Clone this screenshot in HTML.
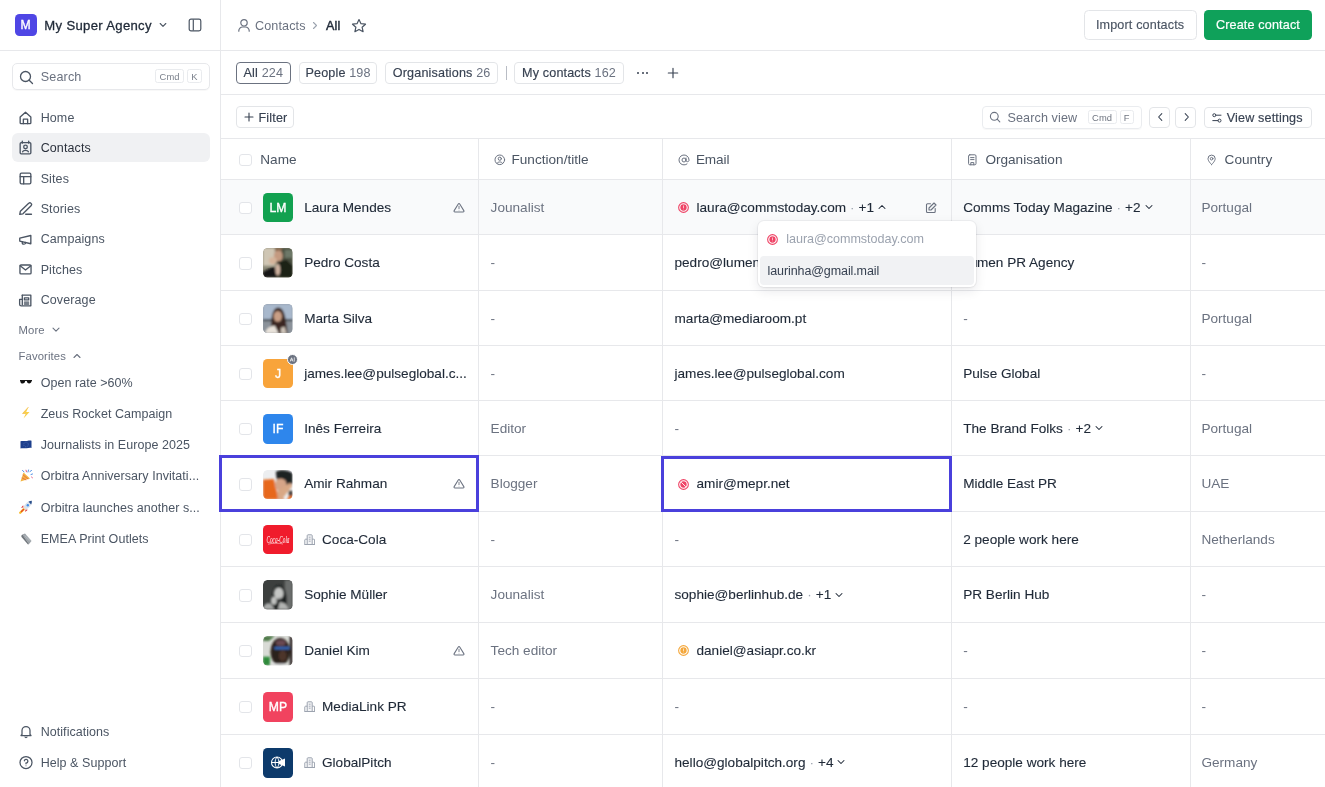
<!DOCTYPE html>
<html><head><meta charset="utf-8"><title>Contacts</title>
<style>
html,body{margin:0;padding:0;}
body{will-change:transform;width:1325px;height:787px;position:relative;overflow:hidden;background:#fff;font-family:"Liberation Sans", sans-serif;}
.t{position:absolute;line-height:20px;white-space:nowrap;}
svg{display:block}
</style></head><body>
<svg width="0" height="0" style="position:absolute"><defs><filter id="bl" x="-20%" y="-20%" width="140%" height="140%"><feGaussianBlur stdDeviation="0.9"/></filter></defs></svg>
<div style="position:absolute;left:0px;top:50px;width:1325px;height:1px;background:#e7e8eb"></div><div style="position:absolute;left:220px;top:0px;width:1px;height:787px;background:#e7e8eb"></div><div style="position:absolute;left:221px;top:94px;width:1104px;height:1px;background:#e7e8eb"></div><div style="position:absolute;left:221px;top:138px;width:1104px;height:1px;background:#e7e8eb"></div><div style="position:absolute;left:14.5px;top:14px;width:22px;height:22px;background:#4f46e5;border-radius:4.5px"></div><div class="t" style="left:14.5px;top:15.20px;font-size:12.2px;color:#fff;font-weight:400;letter-spacing:0px;width:22px;text-align:center;-webkit-text-stroke:0.35px #fff">M</div><div class="t" style="left:44.3px;top:16.00px;font-size:13.1px;color:#1f2937;font-weight:400;letter-spacing:0.33px;-webkit-text-stroke:0.3px #1f2937">My Super Agency</div><svg style="position:absolute;left:159px;top:22px;" width="8" height="6" viewBox="0 0 8 6" fill="none"><path d="M1.2 1.5 L4 4.3 L6.8 1.5" stroke="#4b5563" stroke-width="1.1" stroke-linecap="round" stroke-linejoin="round"/></svg><svg style="position:absolute;left:187px;top:17px;" width="16" height="16" viewBox="0 0 16 16" fill="none"><rect x="2.2" y="2.2" width="11.6" height="11.6" rx="1.8" stroke="#4b5563" stroke-width="1.2"/><path d="M6.3 2.5 V13.5" stroke="#4b5563" stroke-width="1.2"/></svg><div style="position:absolute;left:11.5px;top:62.5px;width:198px;height:27.6px;border:1px solid #e7e8eb;border-radius:5px;box-sizing:border-box;background:#fff;box-shadow:0 1px 1px rgba(0,0,0,0.03)"></div><svg style="position:absolute;left:18.5px;top:70px;" width="15" height="15" viewBox="0 0 15 15" fill="none"><circle cx="6.5" cy="6.5" r="5" stroke="#4b5563" stroke-width="1.3"/><path d="M10.2 10.2 L13.5 13.5" stroke="#4b5563" stroke-width="1.3" stroke-linecap="round"/></svg><div class="t" style="left:40.7px;top:66.80px;font-size:12.6px;color:#6b7280;font-weight:400;letter-spacing:0.15px;">Search</div><div style="position:absolute;left:154.7px;top:69.3px;width:29.8px;height:14px;border:1px solid #e9ebee;border-radius:2.5px;box-sizing:border-box"></div><div class="t" style="left:154.7px;top:66.60px;font-size:9.4px;color:#7b818c;font-weight:400;letter-spacing:0.1px;width:29.8px;text-align:center">Cmd</div><div style="position:absolute;left:187px;top:69.3px;width:14.8px;height:14px;border:1px solid #e9ebee;border-radius:2.5px;box-sizing:border-box"></div><div class="t" style="left:187px;top:66.60px;font-size:9.4px;color:#7b818c;font-weight:400;letter-spacing:0px;width:14.8px;text-align:center">K</div><div style="position:absolute;left:11.5px;top:133.3px;width:198px;height:29.2px;background:#f0f1f3;border-radius:6px"></div><svg style="position:absolute;left:18.2px;top:110.39999999999999px;" width="15" height="16" viewBox="0 0 14 15" fill="none"><path d="M2 6.5 L7 2 L12 6.5 V12 a0.8 0.8 0 0 1 -0.8 0.8 H2.8 A0.8 0.8 0 0 1 2 12 Z" stroke="#4b5563" stroke-width="1.25" stroke-linecap="round" stroke-linejoin="round"/><path d="M5 12.8 V8.6 H9 V12.8" stroke="#4b5563" stroke-width="1.25" stroke-linecap="round" stroke-linejoin="round"/></svg><div class="t" style="left:40.7px;top:108.10px;font-size:12.5px;color:#4b5563;font-weight:400;letter-spacing:0.1px;">Home</div><svg style="position:absolute;left:18.2px;top:140.4px;" width="15" height="16" viewBox="0 0 14 15" fill="none"><rect x="2" y="2.5" width="10" height="10.5" rx="1" stroke="#4b5563" stroke-width="1.25" stroke-linecap="round" stroke-linejoin="round"/><path d="M4 1 V3 M10 1 V3" stroke="#4b5563" stroke-width="1.25" stroke-linecap="round" stroke-linejoin="round"/><circle cx="7" cy="6.5" r="1.7" stroke="#4b5563" stroke-width="1.25" stroke-linecap="round" stroke-linejoin="round"/><path d="M4.3 11 C4.8 9.2 9.2 9.2 9.7 11" stroke="#4b5563" stroke-width="1.25" stroke-linecap="round" stroke-linejoin="round"/></svg><div class="t" style="left:40.7px;top:138.10px;font-size:12.5px;color:#2b313c;font-weight:400;letter-spacing:0.1px;">Contacts</div><svg style="position:absolute;left:18.2px;top:170.9px;" width="15" height="16" viewBox="0 0 14 15" fill="none"><rect x="2" y="2" width="10" height="10" rx="1.2" stroke="#4b5563" stroke-width="1.25" stroke-linecap="round" stroke-linejoin="round"/><path d="M2 5.3 H12 M5.3 5.3 V12" stroke="#4b5563" stroke-width="1.25" stroke-linecap="round" stroke-linejoin="round"/></svg><div class="t" style="left:40.7px;top:168.60px;font-size:12.5px;color:#4b5563;font-weight:400;letter-spacing:0.1px;">Sites</div><svg style="position:absolute;left:18.2px;top:201.29999999999998px;" width="15" height="16" viewBox="0 0 14 15" fill="none"><path d="M10 2.2 A1.55 1.55 0 0 1 12.2 4.4 L4.6 12 L1.6 12.6 L2.2 9.6 Z" stroke="#4b5563" stroke-width="1.25" stroke-linecap="round" stroke-linejoin="round"/><path d="M7.2 12.4 H12.6" stroke="#4b5563" stroke-width="1.25" stroke-linecap="round" stroke-linejoin="round"/></svg><div class="t" style="left:40.7px;top:199.00px;font-size:12.5px;color:#4b5563;font-weight:400;letter-spacing:0.1px;">Stories</div><svg style="position:absolute;left:18.2px;top:231.7px;" width="15" height="16" viewBox="0 0 14 15" fill="none"><path d="M1.6 5.8 L12 3.3 V11 L1.6 8.5 Z" stroke="#4b5563" stroke-width="1.25" stroke-linecap="round" stroke-linejoin="round"/><path d="M4 9 V10.4 A1 1 0 0 0 5.2 11.3 L6.4 11.1 A0.9 0.9 0 0 0 7.1 10.2 V9.8" stroke="#4b5563" stroke-width="1.25" stroke-linecap="round" stroke-linejoin="round"/></svg><div class="t" style="left:40.7px;top:229.40px;font-size:12.5px;color:#4b5563;font-weight:400;letter-spacing:0.1px;">Campaigns</div><svg style="position:absolute;left:18.2px;top:262.1px;" width="15" height="16" viewBox="0 0 14 15" fill="none"><rect x="1.8" y="2.8" width="10.4" height="8.4" rx="1" stroke="#4b5563" stroke-width="1.25" stroke-linecap="round" stroke-linejoin="round"/><path d="M2 3.5 L7 7.5 L12 3.5" stroke="#4b5563" stroke-width="1.25" stroke-linecap="round" stroke-linejoin="round"/></svg><div class="t" style="left:40.7px;top:259.80px;font-size:12.5px;color:#4b5563;font-weight:400;letter-spacing:0.1px;">Pitches</div><svg style="position:absolute;left:18.2px;top:292.5px;" width="15" height="16" viewBox="0 0 14 15" fill="none"><path d="M4 2 H12 V12 H3 A1.5 1.5 0 0 1 1.5 10.5 V6 H4" stroke="#4b5563" stroke-width="1.25" stroke-linecap="round" stroke-linejoin="round"/><path d="M4 2 V11" stroke="#4b5563" stroke-width="1.25" stroke-linecap="round" stroke-linejoin="round"/><path d="M6 4.5 H10 V6.5 H6 Z M6 8.5 H10 M6 10.3 H10" stroke="#4b5563" stroke-width="1.25" stroke-linecap="round" stroke-linejoin="round"/></svg><div class="t" style="left:40.7px;top:290.20px;font-size:12.5px;color:#4b5563;font-weight:400;letter-spacing:0.1px;">Coverage</div><div class="t" style="left:18.6px;top:319.90px;font-size:11.3px;color:#6b7280;font-weight:400;letter-spacing:0.1px;">More</div><svg style="position:absolute;left:51.5px;top:327px;" width="8" height="6" viewBox="0 0 8 6" fill="none"><path d="M1 1.2 L4 4.2 L7 1.2" stroke="#6b7280" stroke-width="1.1" stroke-linecap="round" stroke-linejoin="round"/></svg><div class="t" style="left:18.6px;top:345.90px;font-size:11.3px;color:#6b7280;font-weight:400;letter-spacing:0.1px;">Favorites</div><svg style="position:absolute;left:72.5px;top:352.5px;" width="8" height="6" viewBox="0 0 8 6" fill="none"><path d="M1 4.5 L4 1.5 L7 4.5" stroke="#6b7280" stroke-width="1.1" stroke-linecap="round" stroke-linejoin="round"/></svg><svg style="position:absolute;left:18.8px;top:375.2px;" width="14" height="14" viewBox="0 0 14 14" fill="none"><g transform="translate(0,2.8)"><path d="M1 2.2 H13 V3.2 H1 Z" fill="#1a1a1a"/><path d="M1.3 3 H6.2 C6.2 6.4 1.8 6.8 1.3 3.6 Z" fill="#111"/><path d="M7.8 3 H12.7 C12.2 6.8 7.8 6.4 7.8 3 Z" fill="#111"/></g></svg><div class="t" style="left:40.7px;top:372.80px;font-size:12.5px;color:#4b5563;font-weight:400;letter-spacing:0.05px;">Open rate &gt;60%</div><svg style="position:absolute;left:18.8px;top:406.3px;" width="14" height="14" viewBox="0 0 14 14" fill="none"><path d="M9.5 1 L3.5 7.5 H6.8 L4.5 12.5 L10.5 6 H7.2 Z" fill="#f9cf4a"/><path d="M9.5 1 L3.5 7.5 H6.8" stroke="#f3b53a" stroke-width="0.6" fill="none"/></svg><div class="t" style="left:40.7px;top:403.90px;font-size:12.5px;color:#4b5563;font-weight:400;letter-spacing:0.05px;">Zeus Rocket Campaign</div><svg style="position:absolute;left:18.8px;top:437.5px;" width="14" height="14" viewBox="0 0 14 14" fill="none"><path d="M1.5 3.2 C4 2.4 6 3.4 8 3 C10 2.6 11.5 2.4 12.5 2.8 V10 C11 9.6 9.5 10 7.5 10.3 C5.5 10.6 3.5 9.8 1.5 10.5 Z" fill="#1d3f8c"/><circle cx="7" cy="6.5" r="2.3" stroke="#5a78c0" stroke-width="0.7" stroke-dasharray="0.8 0.9" fill="none"/></svg><div class="t" style="left:40.7px;top:435.10px;font-size:12.5px;color:#4b5563;font-weight:400;letter-spacing:0.05px;">Journalists in Europe 2025</div><svg style="position:absolute;left:18.8px;top:468.8px;" width="14" height="14" viewBox="0 0 14 14" fill="none"><path d="M1.5 12.5 L4.5 3.5 L11 9.5 Z" fill="#f2b441"/><path d="M2.8 8.8 L7.2 11 M3.8 5.8 L9.2 10" stroke="#e8684a" stroke-width="0.9"/><path d="M3.5 1.5 L5 2.8 M9.5 1 L9 3 M12 5.5 L13.5 5 M11 2.5 L12.5 1.5" stroke="#3b82e0" stroke-width="0.9" stroke-linecap="round"/><path d="M7 1.2 L7.5 2.8 M12.5 8 L13.5 8.8" stroke="#e0507a" stroke-width="0.9" stroke-linecap="round"/></svg><div class="t" style="left:40.7px;top:466.40px;font-size:12.5px;color:#4b5563;font-weight:400;letter-spacing:0.05px;">Orbitra Anniversary Invitati...</div><svg style="position:absolute;left:18.8px;top:500.0px;" width="14" height="14" viewBox="0 0 14 14" fill="none"><path d="M12.8 0.8 C9 1 5.8 3.8 4.5 7.5 L6.5 9.5 C10.2 8.2 13 5 12.8 0.8 Z" fill="#d9e2ec"/><path d="M12.8 0.8 C11.5 0.9 10.5 1.2 9.5 1.8 L12.2 4.5 C12.7 3.4 12.9 2.2 12.8 0.8 Z" fill="#2a4e8a"/><circle cx="8.8" cy="5.2" r="1.2" fill="#3f8ee8"/><path d="M4.5 7.5 L2 7.8 L4.2 5.2 Z M6.5 9.5 L6.2 12 L8.8 9.8 Z" fill="#d83a3a"/><path d="M4.6 9.4 L1.2 12.8" stroke="#f7b928" stroke-width="2.2" stroke-linecap="round"/><path d="M4.6 9.4 L2.5 11.5" stroke="#e8452a" stroke-width="1.2" stroke-linecap="round"/></svg><div class="t" style="left:40.7px;top:497.60px;font-size:12.5px;color:#4b5563;font-weight:400;letter-spacing:0.05px;">Orbitra launches another s...</div><svg style="position:absolute;left:18.8px;top:531.2px;" width="14" height="14" viewBox="0 0 14 14" fill="none"><g transform="translate(0,1.5)"><path d="M3.5 2 L6 1 L12.5 8.5 L10 11.5 Z" fill="#9aa0a6"/><path d="M3.5 2 C2.5 2.5 2 3.5 2.5 4.5 L9 12 L10 11.5 Z" fill="#6f757b"/><path d="M5.5 3 L11 9 M6.8 2.5 L11.8 8" stroke="#c8ccd0" stroke-width="0.6"/></g></svg><div class="t" style="left:40.7px;top:528.80px;font-size:12.5px;color:#4b5563;font-weight:400;letter-spacing:0.05px;">EMEA Print Outlets</div><svg style="position:absolute;left:18.5px;top:723.5px;" width="14" height="15" viewBox="0 0 14 15" fill="none"><path d="M3 10.5 V6.5 A4 4 0 0 1 11 6.5 V10.5 L12 11.5 H2 Z" stroke="#4b5563" stroke-width="1.25" stroke-linecap="round" stroke-linejoin="round"/><path d="M6 13 A1.2 1.2 0 0 0 8 13" stroke="#4b5563" stroke-width="1.25" stroke-linecap="round" stroke-linejoin="round"/></svg><div class="t" style="left:40.7px;top:721.60px;font-size:12.5px;color:#4b5563;font-weight:400;letter-spacing:0.05px;">Notifications</div><svg style="position:absolute;left:18.5px;top:754.5px;" width="14" height="15" viewBox="0 0 14 15" fill="none"><circle cx="7" cy="7.5" r="6" stroke="#4b5563" stroke-width="1.25" stroke-linecap="round" stroke-linejoin="round"/><path d="M5.3 5.8 A1.8 1.8 0 1 1 7 8 V8.8" stroke="#4b5563" stroke-width="1.25" stroke-linecap="round" stroke-linejoin="round"/><circle cx="7" cy="10.8" r="0.5" fill="#4b5563"/></svg><div class="t" style="left:40.7px;top:752.60px;font-size:12.5px;color:#4b5563;font-weight:400;letter-spacing:0.05px;">Help &amp; Support</div><svg style="position:absolute;left:236.5px;top:17.5px;" width="14" height="15" viewBox="0 0 14 15" fill="none"><circle cx="7" cy="4.8" r="3.2" stroke="#6b7280" stroke-width="1.2" stroke-linecap="round" stroke-linejoin="round"/><path d="M1.8 13.2 V12.8 A3.8 3.8 0 0 1 5.6 9 H8.4 A3.8 3.8 0 0 1 12.2 12.8 V13.2" stroke="#6b7280" stroke-width="1.2" stroke-linecap="round" stroke-linejoin="round"/></svg><div class="t" style="left:255px;top:15.60px;font-size:12.6px;color:#6b7280;font-weight:400;letter-spacing:0.12px;">Contacts</div><svg style="position:absolute;left:312px;top:20.5px;" width="6" height="9" viewBox="0 0 6 9" fill="none"><path d="M1.5 1.5 L4.5 4.5 L1.5 7.5" stroke="#9ca3af" stroke-width="1.1" stroke-linecap="round" stroke-linejoin="round"/></svg><div class="t" style="left:326px;top:15.60px;font-size:12.6px;color:#1f2937;font-weight:400;letter-spacing:0.1px;-webkit-text-stroke:0.45px #1f2937">All</div><svg style="position:absolute;left:350.5px;top:17.5px;" width="16" height="15" viewBox="0 0 16 15" fill="none"><path d="M8 1.5 L10 5.7 L14.5 6.2 L11.1 9.2 L12.1 13.7 L8 11.4 L3.9 13.7 L4.9 9.2 L1.5 6.2 L6 5.7 Z" stroke="#4b5563" stroke-width="1.2" stroke-linejoin="round"/></svg><div style="position:absolute;left:1083.5px;top:10.4px;width:113.2px;height:29.2px;border:1px solid #e3e5e8;border-radius:4.5px;box-sizing:border-box;background:#fff"></div><div class="t" style="left:1083.5px;top:15.40px;font-size:12.6px;color:#4b5563;font-weight:400;letter-spacing:0.15px;width:113.2px;text-align:center;-webkit-text-stroke:0.15px #4b5563">Import contacts</div><div style="position:absolute;left:1204.2px;top:10.4px;width:107.6px;height:29.2px;background:#0fa15a;border-radius:4.5px"></div><div class="t" style="left:1204.2px;top:15.40px;font-size:12.6px;color:#fff;font-weight:400;letter-spacing:0.15px;width:107.6px;text-align:center;-webkit-text-stroke:0.2px #fff">Create contact</div><div style="position:absolute;left:236px;top:62.2px;width:54.69999999999999px;height:21.5px;border:1px solid #6b7280;border-radius:4px;box-sizing:border-box"></div><div class="t" style="left:236px;top:63.2px;width:54.69999999999999px;text-align:center;font-size:12.6px;letter-spacing:0.15px;color:#374151;line-height:20px;-webkit-text-stroke:0.15px #374151">All <span style="color:#6b7280;-webkit-text-stroke:0">224</span></div><div style="position:absolute;left:298.6px;top:62.2px;width:78.89999999999998px;height:21.5px;border:1px solid #e3e5e8;border-radius:4px;box-sizing:border-box"></div><div class="t" style="left:298.6px;top:63.2px;width:78.89999999999998px;text-align:center;font-size:12.6px;letter-spacing:0.15px;color:#374151;line-height:20px;-webkit-text-stroke:0.15px #374151">People <span style="color:#6b7280;-webkit-text-stroke:0">198</span></div><div style="position:absolute;left:385.4px;top:62.2px;width:112.5px;height:21.5px;border:1px solid #e3e5e8;border-radius:4px;box-sizing:border-box"></div><div class="t" style="left:385.4px;top:63.2px;width:112.5px;text-align:center;font-size:12.6px;letter-spacing:0.15px;color:#374151;line-height:20px;-webkit-text-stroke:0.15px #374151">Organisations <span style="color:#6b7280;-webkit-text-stroke:0">26</span></div><div style="position:absolute;left:505.8px;top:66px;width:1px;height:13.5px;background:#b9bdc5"></div><div style="position:absolute;left:514.3px;top:62.2px;width:109.5px;height:21.5px;border:1px solid #e3e5e8;border-radius:4px;box-sizing:border-box"></div><div class="t" style="left:514.3px;top:63.2px;width:109.5px;text-align:center;font-size:12.6px;letter-spacing:0.15px;color:#374151;line-height:20px;-webkit-text-stroke:0.15px #374151">My contacts <span style="color:#6b7280;-webkit-text-stroke:0">162</span></div><div style="position:absolute;left:637.2px;top:72px;width:2.1px;height:2.1px;background:#374151;border-radius:50%"></div><div style="position:absolute;left:641.6px;top:72px;width:2.1px;height:2.1px;background:#374151;border-radius:50%"></div><div style="position:absolute;left:646px;top:72px;width:2.1px;height:2.1px;background:#374151;border-radius:50%"></div><svg style="position:absolute;left:666.5px;top:67.3px;" width="12" height="12" viewBox="0 0 12 12" fill="none"><path d="M6 1.3 V10.7 M1.3 6 H10.7" stroke="#374151" stroke-width="1.15" stroke-linecap="round"/></svg><div style="position:absolute;left:236px;top:106.3px;width:58.4px;height:21.3px;border:1px solid #e3e5e8;border-radius:4px;box-sizing:border-box"></div><svg style="position:absolute;left:243.5px;top:112px;" width="10" height="10" viewBox="0 0 10 10" fill="none"><path d="M5 1 V9 M1 5 H9" stroke="#374151" stroke-width="1.1" stroke-linecap="round"/></svg><div class="t" style="left:258.5px;top:107.60px;font-size:12.6px;color:#374151;font-weight:400;letter-spacing:0.15px;-webkit-text-stroke:0.15px #374151">Filter</div><div style="position:absolute;left:981.6px;top:105.6px;width:160.3px;height:23.2px;border:1px solid #eaecef;border-radius:4px;box-sizing:border-box;box-shadow:0 1px 1px rgba(0,0,0,0.03)"></div><svg style="position:absolute;left:988.5px;top:111px;" width="12" height="12" viewBox="0 0 12 12" fill="none"><circle cx="5.3" cy="5.3" r="3.9" stroke="#6b7280" stroke-width="1.1"/><path d="M8.2 8.2 L10.8 10.8" stroke="#6b7280" stroke-width="1.1" stroke-linecap="round"/></svg><div class="t" style="left:1007.5px;top:107.60px;font-size:12.6px;color:#6b7280;font-weight:400;letter-spacing:0.1px;">Search view</div><div style="position:absolute;left:1087.6px;top:110.2px;width:29px;height:14.2px;border:1px solid #e9ebee;border-radius:2.5px;box-sizing:border-box"></div><div class="t" style="left:1087.6px;top:107.60px;font-size:9.4px;color:#6f7580;font-weight:400;letter-spacing:0.1px;width:29px;text-align:center">Cmd</div><div style="position:absolute;left:1119.5px;top:110.2px;width:14px;height:14.2px;border:1px solid #e9ebee;border-radius:2.5px;box-sizing:border-box"></div><div class="t" style="left:1119.5px;top:107.60px;font-size:9.4px;color:#6f7580;font-weight:400;letter-spacing:0px;width:14px;text-align:center">F</div><div style="position:absolute;left:1149.3px;top:106.9px;width:21.2px;height:21.1px;border:1px solid #e3e5e8;border-radius:4px;box-sizing:border-box"></div><svg style="position:absolute;left:1155.5px;top:112.3px;" width="9" height="10" viewBox="0 0 9 10" fill="none"><path d="M5.8 1.6 L2.6 5 L5.8 8.4" stroke="#374151" stroke-width="1.05" stroke-linecap="round" stroke-linejoin="round"/></svg><div style="position:absolute;left:1175.2px;top:106.9px;width:21.1px;height:21.1px;border:1px solid #e3e5e8;border-radius:4px;box-sizing:border-box"></div><svg style="position:absolute;left:1181.5px;top:112.3px;" width="9" height="10" viewBox="0 0 9 10" fill="none"><path d="M3.2 1.6 L6.4 5 L3.2 8.4" stroke="#374151" stroke-width="1.05" stroke-linecap="round" stroke-linejoin="round"/></svg><div style="position:absolute;left:1204.3px;top:106.9px;width:107.5px;height:21.1px;border:1px solid #e3e5e8;border-radius:4px;box-sizing:border-box"></div><svg style="position:absolute;left:1212.3px;top:112.6px;" width="10" height="10" viewBox="0 0 10 10" fill="none"><circle cx="2.3" cy="2.2" r="1.5" stroke="#374151" stroke-width="1"/><path d="M3.8 2.2 H9" stroke="#374151" stroke-width="1" stroke-linecap="round"/><path d="M0.8 7.6 H6" stroke="#374151" stroke-width="1" stroke-linecap="round"/><circle cx="7.5" cy="7.6" r="1.5" stroke="#374151" stroke-width="1"/></svg><div class="t" style="left:1226.8px;top:107.80px;font-size:12.6px;color:#374151;font-weight:400;letter-spacing:0.15px;-webkit-text-stroke:0.15px #374151">View settings</div><div style="position:absolute;left:221px;top:179px;width:1104px;height:55px;background:#f9fafb"></div><div style="position:absolute;left:221px;top:179px;width:1104px;height:1px;background:#e7e8eb"></div><div style="position:absolute;left:221px;top:234px;width:1104px;height:1px;background:#e7e8eb"></div><div style="position:absolute;left:221px;top:290px;width:1104px;height:1px;background:#e7e8eb"></div><div style="position:absolute;left:221px;top:345px;width:1104px;height:1px;background:#e7e8eb"></div><div style="position:absolute;left:221px;top:400px;width:1104px;height:1px;background:#e7e8eb"></div><div style="position:absolute;left:221px;top:455.3px;width:1104px;height:1px;background:#e7e8eb"></div><div style="position:absolute;left:221px;top:511px;width:1104px;height:1px;background:#e7e8eb"></div><div style="position:absolute;left:221px;top:566px;width:1104px;height:1px;background:#e7e8eb"></div><div style="position:absolute;left:221px;top:622px;width:1104px;height:1px;background:#e7e8eb"></div><div style="position:absolute;left:221px;top:677.5px;width:1104px;height:1px;background:#e7e8eb"></div><div style="position:absolute;left:221px;top:734px;width:1104px;height:1px;background:#e7e8eb"></div><div style="position:absolute;left:478px;top:138.5px;width:1px;height:648.5px;background:#e7e8eb"></div><div style="position:absolute;left:662px;top:138.5px;width:1px;height:648.5px;background:#e7e8eb"></div><div style="position:absolute;left:951px;top:138.5px;width:1px;height:648.5px;background:#e7e8eb"></div><div style="position:absolute;left:1190px;top:138.5px;width:1px;height:648.5px;background:#e7e8eb"></div><div style="position:absolute;left:239.2px;top:153.5px;width:12.5px;height:12.5px;border:1px solid #e3e5e9;border-radius:3px;box-sizing:border-box;background:#fff"></div><div class="t" style="left:260.3px;top:149.50px;font-size:13.6px;color:#4b5563;font-weight:400;letter-spacing:0px;">Name</div><svg style="position:absolute;left:493.5px;top:153.5px;" width="12" height="12" viewBox="0 0 12 12" fill="none"><circle cx="5.8" cy="5.8" r="4.8" stroke="#6b7280" stroke-width="1.0" stroke-linecap="round" stroke-linejoin="round"/><circle cx="5.8" cy="4.7" r="1.6" stroke="#6b7280" stroke-width="1.0" stroke-linecap="round" stroke-linejoin="round"/><path d="M3 9.3 C3.8 7.4 7.8 7.4 8.6 9.3" stroke="#6b7280" stroke-width="1.0" stroke-linecap="round" stroke-linejoin="round"/></svg><div class="t" style="left:511.5px;top:149.50px;font-size:13.6px;color:#4b5563;font-weight:400;letter-spacing:0px;">Function/title</div><svg style="position:absolute;left:677.5px;top:153.5px;" width="12" height="12" viewBox="0 0 12 12" fill="none"><circle cx="6" cy="6" r="2" stroke="#6b7280" stroke-width="1.0" stroke-linecap="round" stroke-linejoin="round"/><path d="M8 4 V6.8 A1.6 1.6 0 0 0 11 6.5 V6 A5 5 0 1 0 9 10" stroke="#6b7280" stroke-width="1.0" stroke-linecap="round" stroke-linejoin="round"/></svg><div class="t" style="left:695.9px;top:149.50px;font-size:13.6px;color:#4b5563;font-weight:400;letter-spacing:-0.1px;">Email</div><svg style="position:absolute;left:967px;top:154.0px;" width="10" height="12" viewBox="0 0 10 12" fill="none"><rect x="1.6" y="0.8" width="7.4" height="10" rx="1.2" stroke="#6b7280" stroke-width="1.0" stroke-linecap="round" stroke-linejoin="round"/><path d="M3.6 3.6 H7 M3.6 5.6 H7 M3.8 10.8 V8.6 H6.8 V10.8" stroke="#6b7280" stroke-width="1.0" stroke-linecap="round" stroke-linejoin="round"/></svg><div class="t" style="left:985.4px;top:149.50px;font-size:13.6px;color:#4b5563;font-weight:400;letter-spacing:0px;">Organisation</div><svg style="position:absolute;left:1206.8px;top:154.2px;" width="10" height="12" viewBox="0 0 10 12" fill="none"><path d="M4.6 10.6 C4.6 10.6 1 7.2 1 4.7 A3.6 3.6 0 0 1 8.2 4.7 C8.2 7.2 4.6 10.6 4.6 10.6 Z" stroke="#6b7280" stroke-width="1.0" stroke-linecap="round" stroke-linejoin="round"/><circle cx="4.6" cy="4.7" r="1.3" stroke="#6b7280" stroke-width="1.0" stroke-linecap="round" stroke-linejoin="round"/></svg><div class="t" style="left:1224.6px;top:149.50px;font-size:13.6px;color:#4b5563;font-weight:400;letter-spacing:0px;">Country</div><div style="position:absolute;left:239.2px;top:201.5px;width:12.5px;height:12.5px;border:1px solid #e3e5e9;border-radius:3px;box-sizing:border-box;background:#fff"></div><div style="position:absolute;left:263.2px;top:192.89999999999998px;width:29.6px;height:29.6px;background:#12a150;border-radius:4.5px"></div><div class="t" style="left:263.2px;top:198.00px;font-size:12.2px;color:#fff;font-weight:400;letter-spacing:0.1px;width:29.6px;text-align:center;-webkit-text-stroke:0.35px #fff">LM</div><div class="t" style="left:304.2px;top:197.70px;font-size:13.6px;color:#1f2937;font-weight:400;letter-spacing:0px;-webkit-text-stroke:0.12px #1f2937;">Laura Mendes</div><svg style="position:absolute;left:452.5px;top:200.7px;" width="12" height="12" viewBox="0 0 12 12" fill="none"><path d="M5.1 3.3 Q6 1.8 6.9 3.3 L10.8 9.6 Q11.5 10.9 10 10.9 H2 Q0.5 10.9 1.2 9.6 Z" stroke="#6b7280" stroke-width="1.05" stroke-linejoin="round"/><path d="M6 5.2 V7.6" stroke="#6b7280" stroke-width="0.9" stroke-linecap="round"/><circle cx="6" cy="9.1" r="0.45" fill="#6b7280"/></svg><div class="t" style="left:490.6px;top:197.70px;font-size:13.6px;color:#6b7280;font-weight:400;letter-spacing:0px;">Jounalist</div><svg style="position:absolute;left:678.0px;top:202.2px;" width="11" height="11" viewBox="0 0 11 11" fill="none"><circle cx="5.5" cy="5.5" r="4.85" stroke="#ef4466" stroke-width="1.1"/><circle cx="5.5" cy="5.5" r="3.15" fill="#ef4466"/><path d="M5.5 3.9 V5.9" stroke="#fff" stroke-width="0.8" stroke-linecap="round" opacity="0.8"/><circle cx="5.5" cy="7.1" r="0.4" fill="#fff" opacity="0.8"/></svg><div class="t" style="left:696.5px;top:197.70px;font-size:13.6px;color:#1f2937;font-weight:400;letter-spacing:0px;-webkit-text-stroke:0.12px #1f2937;">laura@commstoday.com<span style="color:#9ca3af;-webkit-text-stroke:0;padding:0 4px 0 4px">·</span>+1<svg style="display:inline-block;vertical-align:middle;margin-left:4px;position:relative;top:-1px" width="8" height="6" viewBox="0 0 8 6" fill="none"><path d="M1 4.5 L4 1.5 L7 4.5" stroke="#1f2937" stroke-width="1.05" stroke-linecap="round" stroke-linejoin="round"/></svg></div><svg style="position:absolute;left:924.8px;top:201.5px;" width="12" height="12" viewBox="0 0 12 12" fill="none"><path d="M5.5 1.8 H2.5 A1 1 0 0 0 1.5 2.8 V9.5 A1 1 0 0 0 2.5 10.5 H9.2 A1 1 0 0 0 10.2 9.5 V6.5" stroke="#6b7280" stroke-width="1.1" stroke-linecap="round"/><path d="M9 1 L11 3 L6 8 H4 V6 Z" stroke="#6b7280" stroke-width="1.1" stroke-linejoin="round"/></svg><div class="t" style="left:963.2px;top:197.70px;font-size:13.6px;color:#1f2937;font-weight:400;letter-spacing:0px;-webkit-text-stroke:0.12px #1f2937;">Comms Today Magazine<span style="color:#9ca3af;-webkit-text-stroke:0;padding:0 4px 0 4px">·</span>+2<svg style="display:inline-block;vertical-align:middle;margin-left:4px;position:relative;top:-1px" width="8" height="6" viewBox="0 0 8 6" fill="none"><path d="M1 1.5 L4 4.5 L7 1.5" stroke="#1f2937" stroke-width="1.05" stroke-linecap="round" stroke-linejoin="round"/></svg></div><div class="t" style="left:1201.4px;top:197.70px;font-size:13.6px;color:#6b7280;font-weight:400;letter-spacing:0px;">Portugal</div><div style="position:absolute;left:239.2px;top:257.0px;width:12.5px;height:12.5px;border:1px solid #e3e5e9;border-radius:3px;box-sizing:border-box;background:#fff"></div><svg style="position:absolute;left:263.2px;top:248.40px;border-radius:4.5px" width="29.6" height="29.6" viewBox="0 0 30 30"><defs><clipPath id="cpedro"><rect width="30" height="30" rx="4.5"/></clipPath></defs><g clip-path="url(#cpedro)"><rect width="30" height="30" fill="#8c8a78"/>
<g filter="url(#bl)">
<rect x="0" y="0" width="12" height="18" fill="#cfc6b4"/>
<rect x="18" y="0" width="12" height="30" fill="#4a5040"/>
<rect x="22" y="2" width="8" height="8" fill="#6d7868"/>
<ellipse cx="15.5" cy="8" rx="4.5" ry="6" fill="#c49a80"/>
<rect x="12" y="0" width="7" height="3" fill="#8a6a50"/>
<ellipse cx="10" cy="13" rx="4" ry="3.5" fill="#d5b49a"/>
<path d="M0 24 L10 19 L16 22 L14 30 L0 30 Z" fill="#121212"/>
<path d="M14 14 L24 12 L30 18 V30 H14 Z" fill="#1e2219"/>
<ellipse cx="15" cy="22" rx="2.5" ry="6" fill="#cfb2a0"/>
</g></g></svg><div class="t" style="left:304.2px;top:253.20px;font-size:13.6px;color:#1f2937;font-weight:400;letter-spacing:0px;-webkit-text-stroke:0.12px #1f2937;">Pedro Costa</div><div class="t" style="left:490.6px;top:253.20px;font-size:13.6px;color:#6b7280;font-weight:400;letter-spacing:0px;">-</div><div class="t" style="left:674.5px;top:253.20px;font-size:13.6px;color:#1f2937;font-weight:400;letter-spacing:0px;-webkit-text-stroke:0.12px #1f2937;">pedro@lumenpr.com</div><div class="t" style="left:963.2px;top:253.20px;font-size:13.6px;color:#1f2937;font-weight:400;letter-spacing:0px;-webkit-text-stroke:0.12px #1f2937;"><span style="letter-spacing:-0.7px">Lu</span>men PR Agency</div><div class="t" style="left:1201.4px;top:253.20px;font-size:13.6px;color:#6b7280;font-weight:400;letter-spacing:0px;">-</div><div style="position:absolute;left:239.2px;top:312.5px;width:12.5px;height:12.5px;border:1px solid #e3e5e9;border-radius:3px;box-sizing:border-box;background:#fff"></div><svg style="position:absolute;left:263.2px;top:303.90px;border-radius:4.5px" width="29.6" height="29.6" viewBox="0 0 30 30"><defs><clipPath id="cmarta"><rect width="30" height="30" rx="4.5"/></clipPath></defs><g clip-path="url(#cmarta)"><rect width="30" height="30" fill="#8f98a3"/>
<g filter="url(#bl)">
<rect x="0" y="0" width="30" height="16" fill="#a8b8cc"/>
<rect x="0" y="15.5" width="30" height="2" fill="#2e3438"/>
<rect x="0" y="17.5" width="30" height="12.5" fill="#8b929a"/>
<path d="M8 30 C8 14 9 4 15.5 3.5 C22 4 23 14 25 30 Z" fill="#3a2820"/>
<ellipse cx="15" cy="12.5" rx="4.2" ry="5.5" fill="#c99f86"/>
<path d="M2 30 C3 24 8 22 12 22 L16 30 Z" fill="#e9e3db"/>
<path d="M18 24 L22 23 L24 30 H18 Z" fill="#cfc5ba"/>
</g></g></svg><div class="t" style="left:304.2px;top:308.70px;font-size:13.6px;color:#1f2937;font-weight:400;letter-spacing:0px;-webkit-text-stroke:0.12px #1f2937;">Marta Silva</div><div class="t" style="left:490.6px;top:308.70px;font-size:13.6px;color:#6b7280;font-weight:400;letter-spacing:0px;">-</div><div class="t" style="left:674.5px;top:308.70px;font-size:13.6px;color:#1f2937;font-weight:400;letter-spacing:0px;-webkit-text-stroke:0.12px #1f2937;">marta@mediaroom.pt</div><div class="t" style="left:963.2px;top:308.70px;font-size:13.6px;color:#6b7280;font-weight:400;letter-spacing:0px;">-</div><div class="t" style="left:1201.4px;top:308.70px;font-size:13.6px;color:#6b7280;font-weight:400;letter-spacing:0px;">Portugal</div><div style="position:absolute;left:239.2px;top:367.5px;width:12.5px;height:12.5px;border:1px solid #e3e5e9;border-radius:3px;box-sizing:border-box;background:#fff"></div><div style="position:absolute;left:263.2px;top:358.9px;width:29.6px;height:29.6px;background:#f8a43b;border-radius:4.5px"></div><div class="t" style="left:263.2px;top:364.00px;font-size:12.2px;color:#fff;font-weight:400;letter-spacing:0.1px;width:29.6px;text-align:center;-webkit-text-stroke:0.35px #fff">J</div><div style="position:absolute;left:287.3px;top:354.09999999999997px;width:11px;height:11px;background:#6b7280;border-radius:50%;border:1px solid #fff;box-sizing:border-box"></div><svg style="position:absolute;left:289.3px;top:356.09999999999997px;" width="7" height="7" viewBox="0 0 7 7" fill="none"><path d="M1.3 5.2 L2.6 1.8 L3.9 5.2 M1.8 4 H3.4 M5.3 1.8 V5.2" stroke="#fff" stroke-width="0.7" stroke-linecap="round" stroke-linejoin="round"/></svg><div class="t" style="left:304.2px;top:363.70px;font-size:13.6px;color:#1f2937;font-weight:400;letter-spacing:0px;-webkit-text-stroke:0.12px #1f2937;">james.lee@pulseglobal.c...</div><div class="t" style="left:490.6px;top:363.70px;font-size:13.6px;color:#6b7280;font-weight:400;letter-spacing:0px;">-</div><div class="t" style="left:674.5px;top:363.70px;font-size:13.6px;color:#1f2937;font-weight:400;letter-spacing:0px;-webkit-text-stroke:0.12px #1f2937;">james.lee@pulseglobal.com</div><div class="t" style="left:963.2px;top:363.70px;font-size:13.6px;color:#1f2937;font-weight:400;letter-spacing:0px;-webkit-text-stroke:0.12px #1f2937;">Pulse Global</div><div class="t" style="left:1201.4px;top:363.70px;font-size:13.6px;color:#6b7280;font-weight:400;letter-spacing:0px;">-</div><div style="position:absolute;left:239.2px;top:422.65px;width:12.5px;height:12.5px;border:1px solid #e3e5e9;border-radius:3px;box-sizing:border-box;background:#fff"></div><div style="position:absolute;left:263.2px;top:414.04999999999995px;width:29.6px;height:29.6px;background:#2e86ec;border-radius:4.5px"></div><div class="t" style="left:263.2px;top:419.15px;font-size:12.2px;color:#fff;font-weight:400;letter-spacing:0.1px;width:29.6px;text-align:center;-webkit-text-stroke:0.35px #fff">IF</div><div class="t" style="left:304.2px;top:418.85px;font-size:13.6px;color:#1f2937;font-weight:400;letter-spacing:0px;-webkit-text-stroke:0.12px #1f2937;">Inês Ferreira</div><div class="t" style="left:490.6px;top:418.85px;font-size:13.6px;color:#6b7280;font-weight:400;letter-spacing:0px;">Editor</div><div class="t" style="left:674.5px;top:418.85px;font-size:13.6px;color:#6b7280;font-weight:400;letter-spacing:0px;">-</div><div class="t" style="left:963.2px;top:418.85px;font-size:13.6px;color:#1f2937;font-weight:400;letter-spacing:0px;-webkit-text-stroke:0.12px #1f2937;">The Brand Folks<span style="color:#9ca3af;-webkit-text-stroke:0;padding:0 4px 0 4px">·</span>+2<svg style="display:inline-block;vertical-align:middle;margin-left:4px;position:relative;top:-1px" width="8" height="6" viewBox="0 0 8 6" fill="none"><path d="M1 1.5 L4 4.5 L7 1.5" stroke="#1f2937" stroke-width="1.05" stroke-linecap="round" stroke-linejoin="round"/></svg></div><div class="t" style="left:1201.4px;top:418.85px;font-size:13.6px;color:#6b7280;font-weight:400;letter-spacing:0px;">Portugal</div><div style="position:absolute;left:239.2px;top:478.15px;width:12.5px;height:12.5px;border:1px solid #e3e5e9;border-radius:3px;box-sizing:border-box;background:#fff"></div><svg style="position:absolute;left:263.2px;top:469.55px;border-radius:4.5px" width="29.6" height="29.6" viewBox="0 0 30 30"><defs><clipPath id="camir"><rect width="30" height="30" rx="4.5"/></clipPath></defs><g clip-path="url(#camir)"><rect width="30" height="30" fill="#eceef0"/>
<g filter="url(#bl)">
<path d="M13 2 C16 -1 28 0 30 4 V14 L24 16 C22 10 18 8 14 10 Z" fill="#1c2024"/>
<path d="M0 10 L11 9 L14 22 L22 30 H0 Z" fill="#e7681d"/>
<ellipse cx="18" cy="15" rx="6" ry="6.5" fill="#d6a588"/>
<path d="M14 22 L27 13 L30 16 L19 30 H15 Z" fill="#d9a885"/>
<path d="M24 30 L30 22 V30 Z" fill="#e7681d"/>
<rect x="26" y="21" width="4" height="5" fill="#40403e"/>
</g></g></svg><div class="t" style="left:304.2px;top:474.35px;font-size:13.6px;color:#1f2937;font-weight:400;letter-spacing:0px;-webkit-text-stroke:0.12px #1f2937;">Amir Rahman</div><svg style="position:absolute;left:452.5px;top:477.34999999999997px;" width="12" height="12" viewBox="0 0 12 12" fill="none"><path d="M5.1 3.3 Q6 1.8 6.9 3.3 L10.8 9.6 Q11.5 10.9 10 10.9 H2 Q0.5 10.9 1.2 9.6 Z" stroke="#6b7280" stroke-width="1.05" stroke-linejoin="round"/><path d="M6 5.2 V7.6" stroke="#6b7280" stroke-width="0.9" stroke-linecap="round"/><circle cx="6" cy="9.1" r="0.45" fill="#6b7280"/></svg><div class="t" style="left:490.6px;top:474.35px;font-size:13.6px;color:#6b7280;font-weight:400;letter-spacing:0px;">Blogger</div><svg style="position:absolute;left:678.0px;top:478.84999999999997px;" width="11" height="11" viewBox="0 0 11 11" fill="none"><circle cx="5.5" cy="5.5" r="4.85" stroke="#ef4466" stroke-width="1.1"/><circle cx="5.5" cy="5.5" r="3.15" fill="#ef4466"/><path d="M3.5 3.5 L7.5 7.5" stroke="#fff" stroke-width="0.9" stroke-linecap="round"/></svg><div class="t" style="left:696.5px;top:474.35px;font-size:13.6px;color:#1f2937;font-weight:400;letter-spacing:0px;-webkit-text-stroke:0.12px #1f2937;">amir@mepr.net</div><div class="t" style="left:963.2px;top:474.35px;font-size:13.6px;color:#1f2937;font-weight:400;letter-spacing:0px;-webkit-text-stroke:0.12px #1f2937;">Middle East PR</div><div class="t" style="left:1201.4px;top:474.35px;font-size:13.6px;color:#6b7280;font-weight:400;letter-spacing:0px;">UAE</div><div style="position:absolute;left:239.2px;top:533.5px;width:12.5px;height:12.5px;border:1px solid #e3e5e9;border-radius:3px;box-sizing:border-box;background:#fff"></div><div style="position:absolute;left:263.2px;top:524.9000000000001px;width:29.6px;height:29.6px;background:#f01c2c;border-radius:4.5px"></div><div class="t" style="left:263.2px;top:530.00px;font-size:12.2px;color:#fff;font-weight:400;letter-spacing:0.1px;width:29.6px;text-align:center;-webkit-text-stroke:0.35px #fff"></div><svg style="position:absolute;left:263.2px;top:524.9000000000001px;" width="30" height="30" viewBox="0 0 30 30" fill="none"><text x="15" y="18" text-anchor="middle" font-family="Liberation Serif" font-style="italic" font-size="9.5" fill="#fff" textLength="23" lengthAdjust="spacingAndGlyphs">Coca-Cola</text><path d="M5 19.2 C10 17.8 16 18 20 19" stroke="#fff" stroke-width="0.5" fill="none"/></svg><svg style="position:absolute;left:303.8px;top:533.5px;" width="11.5" height="11.5" viewBox="0 0 11.5 11.5" fill="none"><path d="M3.2 10.6 V1.6 A0.8 0.8 0 0 1 4 0.8 H7.4 A0.8 0.8 0 0 1 8.2 1.6 V10.6 Z" stroke="#9ca3af" stroke-width="1" fill="#f3f4f6"/><path d="M3.2 5.2 H1.6 A0.8 0.8 0 0 0 0.8 6 V10.6 H3.2 M8.2 5.2 H9.8 A0.8 0.8 0 0 1 10.6 6 V10.6 H8.2" stroke="#9ca3af" stroke-width="1" fill="none"/><path d="M4.8 3.2 H6.6 M4.8 5.2 H6.6 M4.8 7.2 H6.6" stroke="#9ca3af" stroke-width="0.9"/><path d="M0.5 10.6 H11" stroke="#9ca3af" stroke-width="1"/></svg><div class="t" style="left:322px;top:529.70px;font-size:13.6px;color:#1f2937;font-weight:400;letter-spacing:0px;-webkit-text-stroke:0.12px #1f2937;">Coca-Cola</div><div class="t" style="left:490.6px;top:529.70px;font-size:13.6px;color:#6b7280;font-weight:400;letter-spacing:0px;">-</div><div class="t" style="left:674.5px;top:529.70px;font-size:13.6px;color:#6b7280;font-weight:400;letter-spacing:0px;">-</div><div class="t" style="left:963.2px;top:529.70px;font-size:13.6px;color:#1f2937;font-weight:400;letter-spacing:0px;-webkit-text-stroke:0.12px #1f2937;">2 people work here</div><div class="t" style="left:1201.4px;top:529.70px;font-size:13.6px;color:#6b7280;font-weight:400;letter-spacing:0px;">Netherlands</div><div style="position:absolute;left:239.2px;top:589.0px;width:12.5px;height:12.5px;border:1px solid #e3e5e9;border-radius:3px;box-sizing:border-box;background:#fff"></div><svg style="position:absolute;left:263.2px;top:580.40px;border-radius:4.5px" width="29.6" height="29.6" viewBox="0 0 30 30"><defs><clipPath id="csophie"><rect width="30" height="30" rx="4.5"/></clipPath></defs><g clip-path="url(#csophie)"><rect width="30" height="30" fill="#3c3f3e"/>
<g filter="url(#bl)">
<rect x="22" y="0" width="8" height="30" fill="#6a6d6c"/>
<path d="M10 30 C9 16 10 5 16 5 C23 5 25 16 24 30 Z" fill="#1e2120"/>
<ellipse cx="16" cy="13.5" rx="4.8" ry="6" fill="#c4c6c4"/>
<path d="M16 17.5 L18 18 L16 19 Z" fill="#6a6a6a"/>
<ellipse cx="11" cy="21" rx="3" ry="4" fill="#bfc1bf"/>
<path d="M0 30 C1 24 4 23 8 24 L12 30 Z" fill="#a9abaa"/>
<path d="M15 30 L17 22 L23 24 L26 30 Z" fill="#b2b4b2"/>
</g></g></svg><div class="t" style="left:304.2px;top:585.20px;font-size:13.6px;color:#1f2937;font-weight:400;letter-spacing:0px;-webkit-text-stroke:0.12px #1f2937;">Sophie Müller</div><div class="t" style="left:490.6px;top:585.20px;font-size:13.6px;color:#6b7280;font-weight:400;letter-spacing:0px;">Jounalist</div><div class="t" style="left:674.5px;top:585.20px;font-size:13.6px;color:#1f2937;font-weight:400;letter-spacing:0px;-webkit-text-stroke:0.12px #1f2937;">sophie@berlinhub.de<span style="color:#9ca3af;-webkit-text-stroke:0;padding:0 4px 0 4px">·</span>+1<svg style="display:inline-block;vertical-align:middle;margin-left:4px;position:relative;top:-1px" width="8" height="6" viewBox="0 0 8 6" fill="none"><path d="M1 1.5 L4 4.5 L7 1.5" stroke="#1f2937" stroke-width="1.05" stroke-linecap="round" stroke-linejoin="round"/></svg></div><div class="t" style="left:963.2px;top:585.20px;font-size:13.6px;color:#1f2937;font-weight:400;letter-spacing:0px;-webkit-text-stroke:0.12px #1f2937;">PR Berlin Hub</div><div class="t" style="left:1201.4px;top:585.20px;font-size:13.6px;color:#6b7280;font-weight:400;letter-spacing:0px;">-</div><div style="position:absolute;left:239.2px;top:644.75px;width:12.5px;height:12.5px;border:1px solid #e3e5e9;border-radius:3px;box-sizing:border-box;background:#fff"></div><svg style="position:absolute;left:263.2px;top:636.15px;border-radius:4.5px" width="29.6" height="29.6" viewBox="0 0 30 30"><defs><clipPath id="cdaniel"><rect width="30" height="30" rx="4.5"/></clipPath></defs><g clip-path="url(#cdaniel)"><rect width="30" height="30" fill="#d9dbd6"/>
<g filter="url(#bl)">
<path d="M0 0 H12 L6 5 H0 Z" fill="#4f7a48"/>
<rect x="0" y="21" width="7" height="9" fill="#2f8a3a"/>
<ellipse cx="17.5" cy="16" rx="10" ry="14" fill="#2b201b"/>
<ellipse cx="18" cy="7" rx="5" ry="3" fill="#6a4a52"/>
<ellipse cx="20" cy="20" rx="4" ry="5.5" fill="#4e352b"/>
<rect x="11.5" y="11" width="16" height="2.8" rx="1.3" fill="#3468b8"/>
<rect x="27" y="0" width="3" height="30" fill="#2a2422"/>
<rect x="9" y="28" width="14" height="2" fill="#e6e8ea"/>
</g></g></svg><div class="t" style="left:304.2px;top:640.95px;font-size:13.6px;color:#1f2937;font-weight:400;letter-spacing:0px;-webkit-text-stroke:0.12px #1f2937;">Daniel Kim</div><svg style="position:absolute;left:452.5px;top:643.95px;" width="12" height="12" viewBox="0 0 12 12" fill="none"><path d="M5.1 3.3 Q6 1.8 6.9 3.3 L10.8 9.6 Q11.5 10.9 10 10.9 H2 Q0.5 10.9 1.2 9.6 Z" stroke="#6b7280" stroke-width="1.05" stroke-linejoin="round"/><path d="M6 5.2 V7.6" stroke="#6b7280" stroke-width="0.9" stroke-linecap="round"/><circle cx="6" cy="9.1" r="0.45" fill="#6b7280"/></svg><div class="t" style="left:490.6px;top:640.95px;font-size:13.6px;color:#6b7280;font-weight:400;letter-spacing:0px;">Tech editor</div><svg style="position:absolute;left:678.0px;top:645.45px;" width="11" height="11" viewBox="0 0 11 11" fill="none"><circle cx="5.5" cy="5.5" r="4.85" stroke="#f4a73b" stroke-width="1.1"/><circle cx="5.5" cy="5.5" r="3.15" fill="#f4a73b"/><path d="M5.5 3.9 V5.9" stroke="#fff" stroke-width="0.8" stroke-linecap="round" opacity="0.8"/><circle cx="5.5" cy="7.1" r="0.4" fill="#fff" opacity="0.8"/></svg><div class="t" style="left:696.5px;top:640.95px;font-size:13.6px;color:#1f2937;font-weight:400;letter-spacing:0px;-webkit-text-stroke:0.12px #1f2937;">daniel@asiapr.co.kr</div><div class="t" style="left:963.2px;top:640.95px;font-size:13.6px;color:#6b7280;font-weight:400;letter-spacing:0px;">-</div><div class="t" style="left:1201.4px;top:640.95px;font-size:13.6px;color:#6b7280;font-weight:400;letter-spacing:0px;">-</div><div style="position:absolute;left:239.2px;top:700.75px;width:12.5px;height:12.5px;border:1px solid #e3e5e9;border-radius:3px;box-sizing:border-box;background:#fff"></div><div style="position:absolute;left:263.2px;top:692.1500000000001px;width:29.6px;height:29.6px;background:#f1435f;border-radius:4.5px"></div><div class="t" style="left:263.2px;top:697.25px;font-size:12.2px;color:#fff;font-weight:400;letter-spacing:0.1px;width:29.6px;text-align:center;-webkit-text-stroke:0.35px #fff">MP</div><svg style="position:absolute;left:303.8px;top:700.75px;" width="11.5" height="11.5" viewBox="0 0 11.5 11.5" fill="none"><path d="M3.2 10.6 V1.6 A0.8 0.8 0 0 1 4 0.8 H7.4 A0.8 0.8 0 0 1 8.2 1.6 V10.6 Z" stroke="#9ca3af" stroke-width="1" fill="#f3f4f6"/><path d="M3.2 5.2 H1.6 A0.8 0.8 0 0 0 0.8 6 V10.6 H3.2 M8.2 5.2 H9.8 A0.8 0.8 0 0 1 10.6 6 V10.6 H8.2" stroke="#9ca3af" stroke-width="1" fill="none"/><path d="M4.8 3.2 H6.6 M4.8 5.2 H6.6 M4.8 7.2 H6.6" stroke="#9ca3af" stroke-width="0.9"/><path d="M0.5 10.6 H11" stroke="#9ca3af" stroke-width="1"/></svg><div class="t" style="left:322px;top:696.95px;font-size:13.6px;color:#1f2937;font-weight:400;letter-spacing:0px;-webkit-text-stroke:0.12px #1f2937;">MediaLink PR</div><div class="t" style="left:490.6px;top:696.95px;font-size:13.6px;color:#6b7280;font-weight:400;letter-spacing:0px;">-</div><div class="t" style="left:674.5px;top:696.95px;font-size:13.6px;color:#6b7280;font-weight:400;letter-spacing:0px;">-</div><div class="t" style="left:963.2px;top:696.95px;font-size:13.6px;color:#6b7280;font-weight:400;letter-spacing:0px;">-</div><div class="t" style="left:1201.4px;top:696.95px;font-size:13.6px;color:#6b7280;font-weight:400;letter-spacing:0px;">-</div><div style="position:absolute;left:239.2px;top:756.75px;width:12.5px;height:12.5px;border:1px solid #e3e5e9;border-radius:3px;box-sizing:border-box;background:#fff"></div><div style="position:absolute;left:263.2px;top:748.1500000000001px;width:29.6px;height:29.6px;background:#0d3a6b;border-radius:4.5px"></div><div class="t" style="left:263.2px;top:753.25px;font-size:12.2px;color:#fff;font-weight:400;letter-spacing:0.1px;width:29.6px;text-align:center;-webkit-text-stroke:0.35px #fff"></div><svg style="position:absolute;left:270px;top:755.45px;" width="16" height="15" viewBox="0 0 16 15" fill="none"><circle cx="7" cy="7.5" r="5.5" stroke="#fff" stroke-width="1.1"/><path d="M1.5 7.5 H12.5 M7 2 C4.5 4.5 4.5 10.5 7 13 M7 2 C9.5 4.5 9.5 10.5 7 13" stroke="#fff" stroke-width="1"/><path d="M9 6 L15 3.5 V11.5 L9 9 Z" fill="#fff"/></svg><svg style="position:absolute;left:303.8px;top:756.75px;" width="11.5" height="11.5" viewBox="0 0 11.5 11.5" fill="none"><path d="M3.2 10.6 V1.6 A0.8 0.8 0 0 1 4 0.8 H7.4 A0.8 0.8 0 0 1 8.2 1.6 V10.6 Z" stroke="#9ca3af" stroke-width="1" fill="#f3f4f6"/><path d="M3.2 5.2 H1.6 A0.8 0.8 0 0 0 0.8 6 V10.6 H3.2 M8.2 5.2 H9.8 A0.8 0.8 0 0 1 10.6 6 V10.6 H8.2" stroke="#9ca3af" stroke-width="1" fill="none"/><path d="M4.8 3.2 H6.6 M4.8 5.2 H6.6 M4.8 7.2 H6.6" stroke="#9ca3af" stroke-width="0.9"/><path d="M0.5 10.6 H11" stroke="#9ca3af" stroke-width="1"/></svg><div class="t" style="left:322px;top:752.95px;font-size:13.6px;color:#1f2937;font-weight:400;letter-spacing:0px;-webkit-text-stroke:0.12px #1f2937;">GlobalPitch</div><div class="t" style="left:490.6px;top:752.95px;font-size:13.6px;color:#6b7280;font-weight:400;letter-spacing:0px;">-</div><div class="t" style="left:674.5px;top:752.95px;font-size:13.6px;color:#1f2937;font-weight:400;letter-spacing:0px;-webkit-text-stroke:0.12px #1f2937;">hello@globalpitch.org<span style="color:#9ca3af;-webkit-text-stroke:0;padding:0 4px 0 4px">·</span>+4<svg style="display:inline-block;vertical-align:middle;margin-left:4px;position:relative;top:-1px" width="8" height="6" viewBox="0 0 8 6" fill="none"><path d="M1 1.5 L4 4.5 L7 1.5" stroke="#1f2937" stroke-width="1.05" stroke-linecap="round" stroke-linejoin="round"/></svg></div><div class="t" style="left:963.2px;top:752.95px;font-size:13.6px;color:#1f2937;font-weight:400;letter-spacing:0px;-webkit-text-stroke:0.12px #1f2937;">12 people work here</div><div class="t" style="left:1201.4px;top:752.95px;font-size:13.6px;color:#6b7280;font-weight:400;letter-spacing:0px;">Germany</div><div style="position:absolute;left:219.2px;top:455.4px;width:259.8px;height:56.6px;border:3px solid #4a40dc;box-sizing:border-box"></div><div style="position:absolute;left:661.3px;top:455.6px;width:290.4px;height:56.6px;border:3px solid #4a40dc;box-sizing:border-box"></div><div style="position:absolute;left:757.7px;top:221.3px;width:218.8px;height:66.2px;background:#fff;border-radius:6px;box-shadow:0 4px 12px rgba(17,24,39,0.09),0 1px 3px rgba(17,24,39,0.05),0 0 0 1px rgba(17,24,39,0.04)"></div><div style="position:absolute;left:759.9px;top:255.8px;width:213.7px;height:28.9px;background:#f1f2f4;border-radius:4px"></div><svg style="position:absolute;left:767.2px;top:233.5px;" width="11" height="11" viewBox="0 0 11 11" fill="none"><circle cx="5.5" cy="5.5" r="4.85" stroke="#ef4466" stroke-width="1.1"/><circle cx="5.5" cy="5.5" r="3.15" fill="#ef4466"/><path d="M5.5 3.9 V5.9" stroke="#fff" stroke-width="0.8" stroke-linecap="round" opacity="0.8"/><circle cx="5.5" cy="7.1" r="0.4" fill="#fff" opacity="0.8"/></svg><div class="t" style="left:786.3px;top:229.40px;font-size:12.6px;color:#9ca3af;font-weight:400;letter-spacing:-0.05px;">laura@commstoday.com</div><div class="t" style="left:767.6px;top:260.60px;font-size:12.5px;color:#374151;font-weight:400;letter-spacing:-0.1px;">laurinha@gmail.mail</div>
</body></html>
